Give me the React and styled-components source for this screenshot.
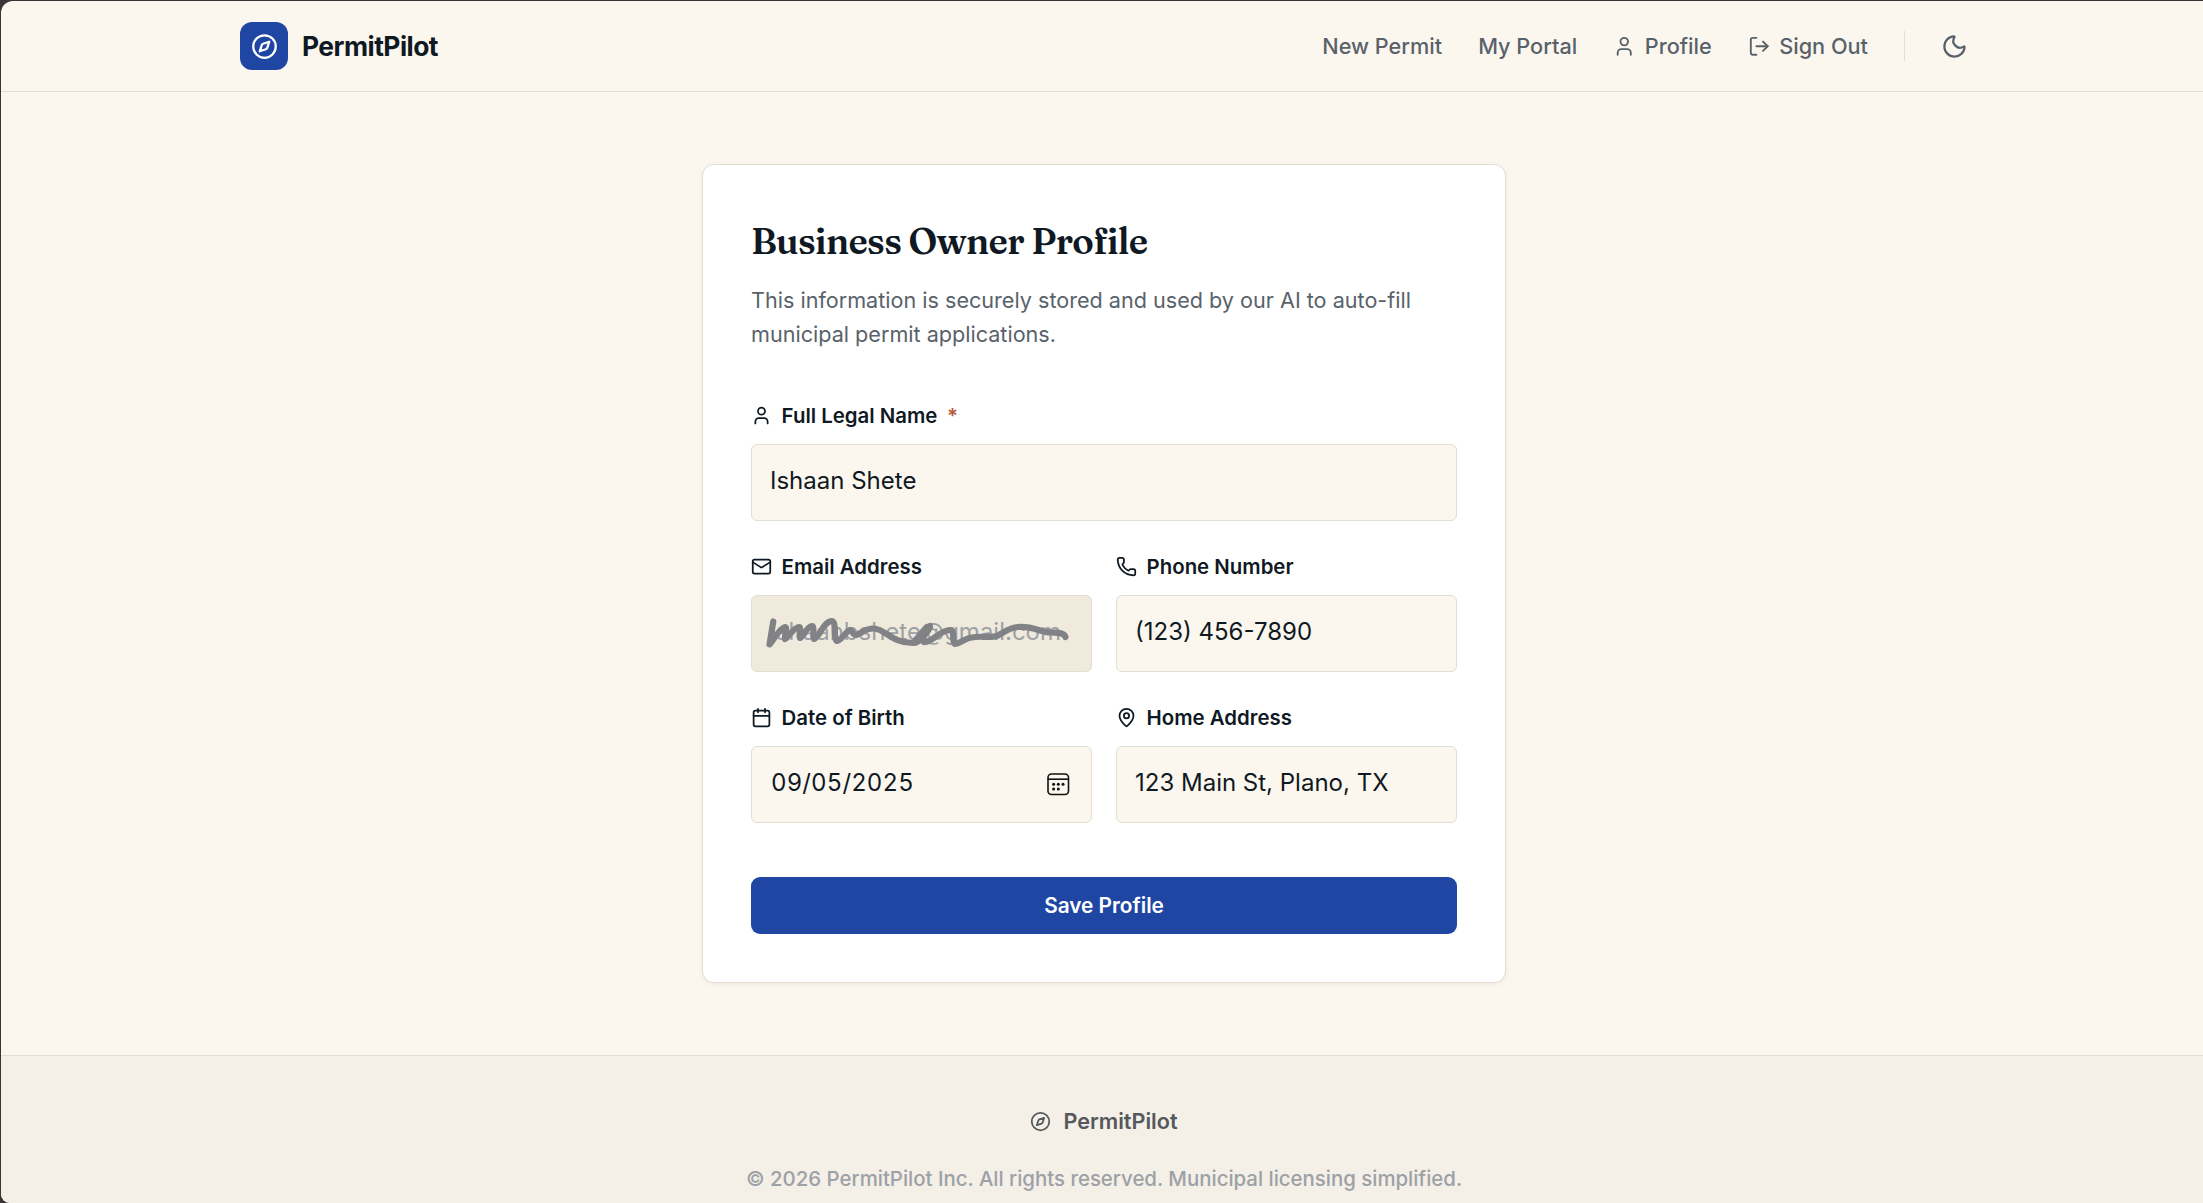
import { useState } from "react";
import styled, { createGlobalStyle } from "styled-components";
import {
  Calendar,
  Compass,
  LogOut,
  Mail,
  MapPin,
  Moon,
  Phone,
  User,
} from "lucide-react";

const COLOR = {
  ink: "#0f1923",
  muted: "#59626a",
  faint: "#9ca1a6",
  accent: "#2046a4",
  danger: "#bb5a3e",
  page: "#fcf7ee",
  field: "#fcf7ee",
  disabled: "#f0eadd",
  footer: "#f4efe7",
  border: "#e3ddd3",
};

const GlobalStyle = createGlobalStyle`
  * {
    box-sizing: border-box;
  }

  body {
    margin: 0;
    background: #3a3637;
    color: ${COLOR.ink};
    font-family: Inter, "Liberation Sans", sans-serif;
    line-height: 1.6;
  }

  h1,
  p {
    margin: 0;
  }
`;

const Window = styled.div`
  display: flex;
  height: 100vh;
  padding: 1px 0 0 1px;
  overflow: hidden;
`;

const Page = styled.div`
  display: flex;
  flex: 0 0 2206px;
  flex-direction: column;
  overflow: hidden;
  border-radius: 12px 0 0 9px;
  background: ${COLOR.page};
`;

const Header = styled.header`
  flex-shrink: 0;
  height: 91px;
  border-bottom: 1px solid ${COLOR.border};
`;

const HeaderInner = styled.div`
  display: flex;
  align-items: center;
  justify-content: space-between;
  width: 1728px;
  height: 100%;
  margin: 0 auto;
`;

const Brand = styled.div`
  display: flex;
  align-items: center;
  gap: 14px;
  font-size: 26.4px;
  font-weight: 700;
  letter-spacing: -0.02em;
`;

const BrandMark = styled.span`
  display: flex;
  align-items: center;
  justify-content: center;
  width: 48px;
  height: 48px;
  border-radius: 12px;
  background: ${COLOR.accent};
  color: #fff;
`;

const Nav = styled.nav`
  display: flex;
  align-items: center;
  gap: 36px;
  color: ${COLOR.muted};
`;

const NavLink = styled.a`
  display: flex;
  align-items: center;
  gap: 9px;
  font-size: 21.7px;
  font-weight: 500;
  cursor: pointer;
`;

const Divider = styled.span`
  width: 1px;
  height: 30px;
  background: ${COLOR.border};
`;

const ThemeButton = styled.button`
  display: flex;
  padding: 0;
  border: none;
  background: none;
  color: inherit;
  cursor: pointer;
`;

const Main = styled.main`
  display: flex;
  flex-shrink: 0;
  justify-content: center;
  padding: 72px 0;
`;

const Card = styled.form`
  width: 804px;
  height: 819px;
  padding: 48px;
  border: 1px solid ${COLOR.border};
  border-radius: 12px;
  background: #fff;
  box-shadow: 0 1px 4px rgba(60, 45, 20, 0.08);
`;

const Title = styled.h1`
  font-family: Fraunces, "Liberation Serif", serif;
  font-size: 36px;
  font-weight: 600;
  letter-spacing: -0.018em;
`;

const Description = styled.p`
  margin-top: 12px;
  color: ${COLOR.muted};
  font-size: 21.6px;
`;

const Fields = styled.div`
  display: grid;
  grid-template-columns: 1fr 1fr;
  gap: 30px 24px;
  margin-top: 48px;
`;

const FieldBox = styled.div`
  display: flex;
  flex-direction: column;
  gap: 12px;
  min-width: 0;
  grid-column: ${({ $wide }) => ($wide ? "1 / -1" : "auto")};
`;

const Label = styled.label`
  display: flex;
  align-items: center;
  gap: 9.6px;
  font-size: 20.4px;
  font-weight: 600;
  line-height: 32px;
`;

const Required = styled.span`
  color: ${COLOR.danger};
`;

const Control = styled.div`
  position: relative;
  display: flex;
  align-items: center;
  height: 77px;
  padding: 0 18px;
  border: 1px solid ${COLOR.border};
  border-radius: 6px;
  background: ${({ $disabled }) => ($disabled ? COLOR.disabled : COLOR.field)};
`;

const Input = styled.input`
  flex: 1;
  min-width: 0;
  padding: 0 0 2px;
  border: none;
  outline: none;
  background: transparent;
  color: ${COLOR.ink};
  font: inherit;
  font-size: 24px;

  &:disabled {
    color: ${COLOR.faint};
  }
`;

const DateInput = styled(Input)`
  padding-left: 1px;
  font-variant-numeric: tabular-nums;
  letter-spacing: 0.1px;
`;

const Scribble = styled.svg`
  position: absolute;
  top: -1px;
  left: -1px;
  width: 341px;
  height: 77px;
  pointer-events: none;
`;

const PickerSvg = styled.svg`
  flex-shrink: 0;
  margin-right: 3px;
`;

const SaveButton = styled.button`
  width: 100%;
  height: 57px;
  margin-top: 54px;
  border: none;
  border-radius: 9px;
  background: ${COLOR.accent};
  color: #fff;
  font: inherit;
  font-size: 20.8px;
  font-weight: 600;
  cursor: pointer;
`;

const Footer = styled.footer`
  display: flex;
  flex: 1 0 auto;
  flex-direction: column;
  align-items: center;
  gap: 24px;
  padding-top: 48px;
  border-top: 1px solid ${COLOR.border};
  background: ${COLOR.footer};
`;

const FooterBrand = styled.div`
  display: flex;
  align-items: center;
  gap: 12px;
  color: #55585c;
  font-size: 21.6px;
  font-weight: 600;
`;

const Copyright = styled.p`
  color: ${COLOR.faint};
  font-size: 20.4px;
  font-weight: 500;
`;

const PickerIcon = () => (
  <PickerSvg width="23" height="23" viewBox="0 0 23 23" fill="none">
    <rect x="1" y="1" width="20.5" height="20.5" rx="3.5" stroke="#111" strokeWidth="1.6" />
    <path d="M1 6.2h20.5" stroke="#111" strokeWidth="1.6" />
    <g fill="#111">
      <circle cx="6.6" cy="11.3" r="1.5" />
      <circle cx="11.3" cy="11.3" r="1.5" />
      <circle cx="16" cy="11.3" r="1.5" />
      <circle cx="6.6" cy="15.9" r="1.5" />
      <circle cx="11.3" cy="15.9" r="1.5" />
    </g>
  </PickerSvg>
);

const Field = ({ icon: Icon, label, required, wide, disabled, children }) => (
  <FieldBox $wide={wide}>
    <Label>
      <Icon size={21} />
      {label}
      {required && <Required>*</Required>}
    </Label>
    <Control $disabled={disabled}>{children}</Control>
  </FieldBox>
);

export default function App() {
  const [profile, setProfile] = useState({
    name: "Ishaan Shete",
    email: "ishaanbshete@gmail.com",
    phone: "(123) 456-7890",
    birth: "09/05/2025",
    address: "123 Main St, Plano, TX",
  });

  const bind = (name) => ({
    name,
    value: profile[name],
    onChange: ({ target }) => setProfile({ ...profile, [name]: target.value }),
  });

  return (
    <Window>
      <GlobalStyle />
      <Page>
        <Header>
          <HeaderInner>
            <Brand>
              <BrandMark>
                <Compass size={27} />
              </BrandMark>
              PermitPilot
            </Brand>
            <Nav>
              <NavLink>New Permit</NavLink>
              <NavLink>My Portal</NavLink>
              <NavLink>
                <User size={22.5} />
                Profile
              </NavLink>
              <NavLink>
                <LogOut size={22.5} />
                Sign Out
              </NavLink>
              <Divider />
              <ThemeButton type="button">
                <Moon size={27} />
              </ThemeButton>
            </Nav>
          </HeaderInner>
        </Header>

        <Main>
          <Card onSubmit={(event) => event.preventDefault()}>
            <Title>Business Owner Profile</Title>
            <Description>
              This information is securely stored and used by our AI to auto-fill
              municipal permit applications.
            </Description>
            <Fields>
              <Field icon={User} label="Full Legal Name" required wide>
                <Input {...bind("name")} />
              </Field>
              <Field icon={Mail} label="Email Address" disabled>
                <Input {...bind("email")} disabled />
                <Scribble viewBox="0 0 341 77" fill="none">
                  <path
                    d="M22.3 26.5 L18.5 49.5 C23 44 29 33 34 32 C37 32 33 42 34 44 C38 42 43 32 48 32 C51 32 47 42 49 43 C53 41 56 31 61 31 C64 31 61 43 63 44 C69 41 73 26 81 26 C86 27 82 44 86 46 C91 45 95 36 99 35 C102 35 101 40 105 40 C111 38 115 33 123 33.5 C134 34 141 48 162 48 C173 47 174 33 179 31 C180 35 168 43 173 47 C181 48 189 35 199 35 C205 36 200 47 204 49 C211 48 213 42.5 224 42 C231 41 240 43 246 41 C253 38 257 32.5 267 32 C283 31 291 38 300 37.5 C306 38 313 37 314.5 42"
                    stroke="#808285"
                    strokeWidth="6.2"
                    strokeLinecap="round"
                    strokeLinejoin="round"
                  />
                  {/* second pass over the thick diagonal near the @ */}
                  <path
                    d="M165 46 L176 33"
                    stroke="#808285"
                    strokeWidth="8"
                    strokeLinecap="round"
                  />
                </Scribble>
              </Field>
              <Field icon={Phone} label="Phone Number">
                <Input {...bind("phone")} />
              </Field>
              <Field icon={Calendar} label="Date of Birth">
                <DateInput {...bind("birth")} />
                <PickerIcon />
              </Field>
              <Field icon={MapPin} label="Home Address">
                <Input {...bind("address")} />
              </Field>
            </Fields>
            <SaveButton>Save Profile</SaveButton>
          </Card>
        </Main>

        <Footer>
          <FooterBrand>
            <Compass size={21} />
            PermitPilot
          </FooterBrand>
          <Copyright>
            © 2026 PermitPilot Inc. All rights reserved. Municipal licensing
            simplified.
          </Copyright>
        </Footer>
      </Page>
    </Window>
  );
}
